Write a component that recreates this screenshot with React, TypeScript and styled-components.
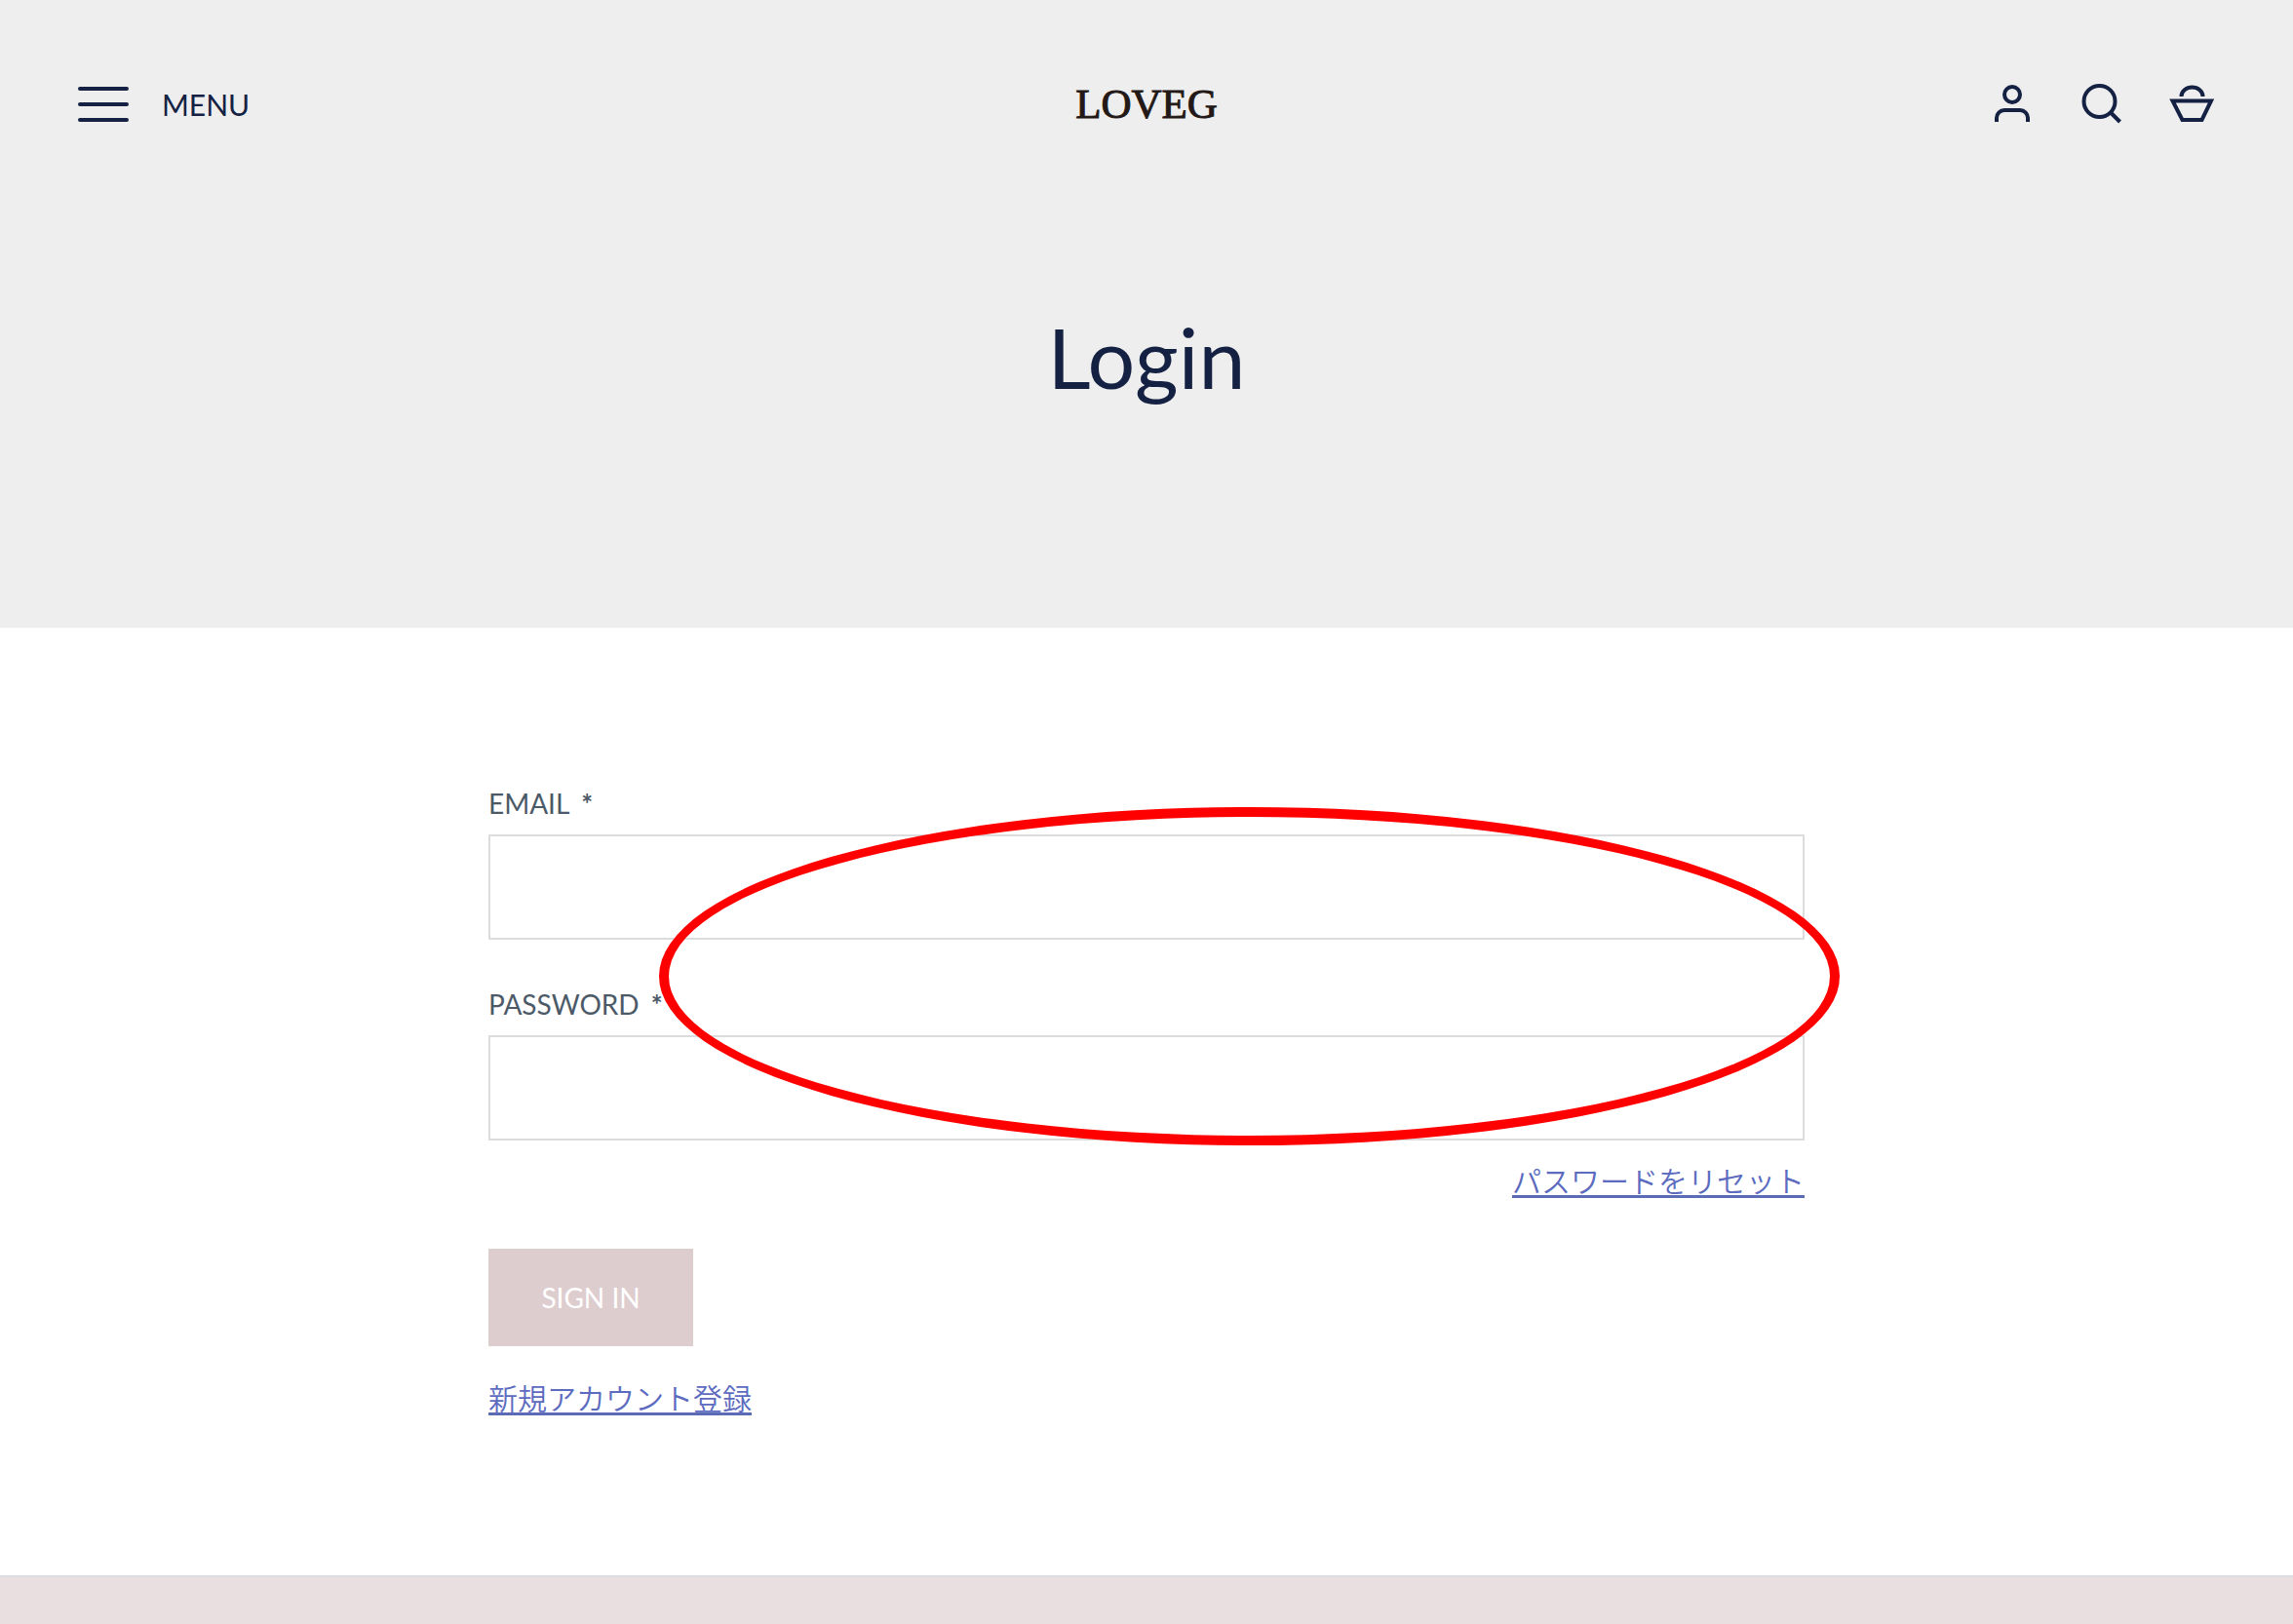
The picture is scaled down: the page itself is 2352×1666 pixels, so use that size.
import React from "react";
import styled, { createGlobalStyle } from "styled-components";

const navy = "#142142";
const sans = `Lato, "Noto Sans CJK JP", sans-serif`;

const GlobalStyle = createGlobalStyle`
  *, *::before, *::after { box-sizing: border-box; }
  body {
    margin: 0;
    background: #fff;
    color: ${navy};
    font-family: ${sans};
  }
`;

const Page = styled.div`
  display: flex;
  flex-direction: column;
  min-height: 100vh;
`;

const Hero = styled.div`
  background: #eee;
  padding-bottom: 228px;
`;

const Header = styled.header`
  display: grid;
  grid-template-columns: 1fr auto 1fr;
  align-items: center;
  height: 214px;
  padding: 0 80px;
`;

const MenuButton = styled.button`
  display: flex;
  align-items: center;
  justify-self: start;
  gap: 34px;
  padding: 0;
  border: 0;
  background: none;
  color: inherit;
  font: 400 30px/40px ${sans};
  cursor: pointer;
`;

const Logo = styled.a`
  color: #231815;
  font: 400 43px/48px "Liberation Serif", serif;
  -webkit-text-stroke: 1px #231815;
  text-decoration: none;
`;

const Tools = styled.nav`
  display: flex;
  justify-self: end;
  gap: 44px;
`;

const ToolLink = styled.a`
  display: block;
  width: 48px;
  height: 48px;
  color: inherit;
`;

const Icon = styled.svg`
  display: block;
  fill: none;
  stroke: currentColor;
  stroke-width: 4;
`;

const Title = styled.h1`
  margin: 102px 0 0;
  font-size: 86px;
  font-weight: 400;
  line-height: 100px;
  text-align: center;
`;

const Main = styled.main`
  padding: 156px 40px 164px;
`;

const Form = styled.form`
  position: relative;
  display: flex;
  flex-direction: column;
  max-width: 1350px;
  margin: 0 auto;
`;

const Field = styled.div`
  display: flex;
  flex-direction: column;
  gap: 8px;

  & + & {
    margin-top: 42px;
  }
`;

const Label = styled.label`
  color: #4c5a68;
  font-size: 28px;
  line-height: 48px;
`;

const Required = styled.span`
  margin-left: 12px;
  font-weight: 700;
`;

const Input = styled.input`
  width: 100%;
  height: 108px;
  padding: 0 32px;
  border: 2px solid #dcdcde;
  border-radius: 0;
  background: #fff;
  color: inherit;
  font: 400 30px ${sans};
`;

const TextLink = styled.a<{ $end?: boolean }>`
  align-self: ${(p) => (p.$end ? "flex-end" : "flex-start")};
  margin-top: ${(p) => (p.$end ? "26px" : "38px")};
  padding-bottom: 2px;
  border-bottom: 3px solid #5c6bb5;
  color: #5c6bc0;
  font: 350 30px/28px "Noto Sans CJK JP", sans-serif;
  text-decoration: none;
`;

const SubmitButton = styled.button`
  align-self: flex-start;
  min-width: 210px;
  height: 100px;
  margin-top: 52px;
  padding: 0 48px;
  border: 0;
  background: #decdcf;
  color: #fff;
  font: 400 28px/40px ${sans};
  cursor: pointer;
`;

const Highlight = styled.div`
  position: absolute;
  top: 28px;
  right: -36px;
  left: 175px;
  height: 347px;
  border: 10px solid #f00;
  border-radius: 50%;
  pointer-events: none;
`;

const Footer = styled.footer`
  flex: 1;
  min-height: 50px;
  border-top: 2px solid #dcdbe0;
  background: #e9dfe0;
`;

function MenuIcon() {
  return (
    <Icon width="52" height="36" viewBox="0 0 52 36" strokeLinecap="round" aria-hidden="true">
      <path d="M2 2h48M2 18h48M2 34h48" />
    </Icon>
  );
}

function AccountIcon() {
  return (
    <Icon width="48" height="48" viewBox="0 1 48 48" aria-hidden="true">
      <circle cx="24" cy="15" r="8" />
      <path d="M8 43v-4a8 8 0 0 1 8-8h16a8 8 0 0 1 8 8v4" />
    </Icon>
  );
}

function SearchIcon() {
  return (
    <Icon width="48" height="48" viewBox="0 1 48 48" aria-hidden="true">
      <circle cx="21.5" cy="22" r="16" />
      <path d="M32.5 33l10 10" />
    </Icon>
  );
}

function BasketIcon() {
  return (
    <Icon width="48" height="48" viewBox="0 1 48 48" aria-hidden="true">
      <path d="M4.500 21.500H44L34.500 41H14.500Z" />
      <path d="M13.500 17a11 9.500 0 0 1 22 0" />
    </Icon>
  );
}

export default function App() {
  return (
    <Page>
      <GlobalStyle />
      <Hero>
        <Header>
          <MenuButton type="button">
            <MenuIcon />
            MENU
          </MenuButton>
          <Logo href="#">LOVEG</Logo>
          <Tools>
            <ToolLink href="#" aria-label="Account">
              <AccountIcon />
            </ToolLink>
            <ToolLink href="#" aria-label="Search">
              <SearchIcon />
            </ToolLink>
            <ToolLink href="#" aria-label="Cart">
              <BasketIcon />
            </ToolLink>
          </Tools>
        </Header>
        <Title>Login</Title>
      </Hero>
      <Main>
        <Form onSubmit={(e) => e.preventDefault()}>
          <Field>
            <Label htmlFor="email">
              EMAIL<Required>*</Required>
            </Label>
            <Input id="email" type="email" required />
          </Field>
          <Field>
            <Label htmlFor="password">
              PASSWORD<Required>*</Required>
            </Label>
            <Input id="password" type="password" required />
          </Field>
          <TextLink href="#" $end>
            パスワードをリセット
          </TextLink>
          <SubmitButton type="submit">SIGN IN</SubmitButton>
          <TextLink href="#">新規アカウント登録</TextLink>
          <Highlight />
        </Form>
      </Main>
      <Footer />
    </Page>
  );
}
